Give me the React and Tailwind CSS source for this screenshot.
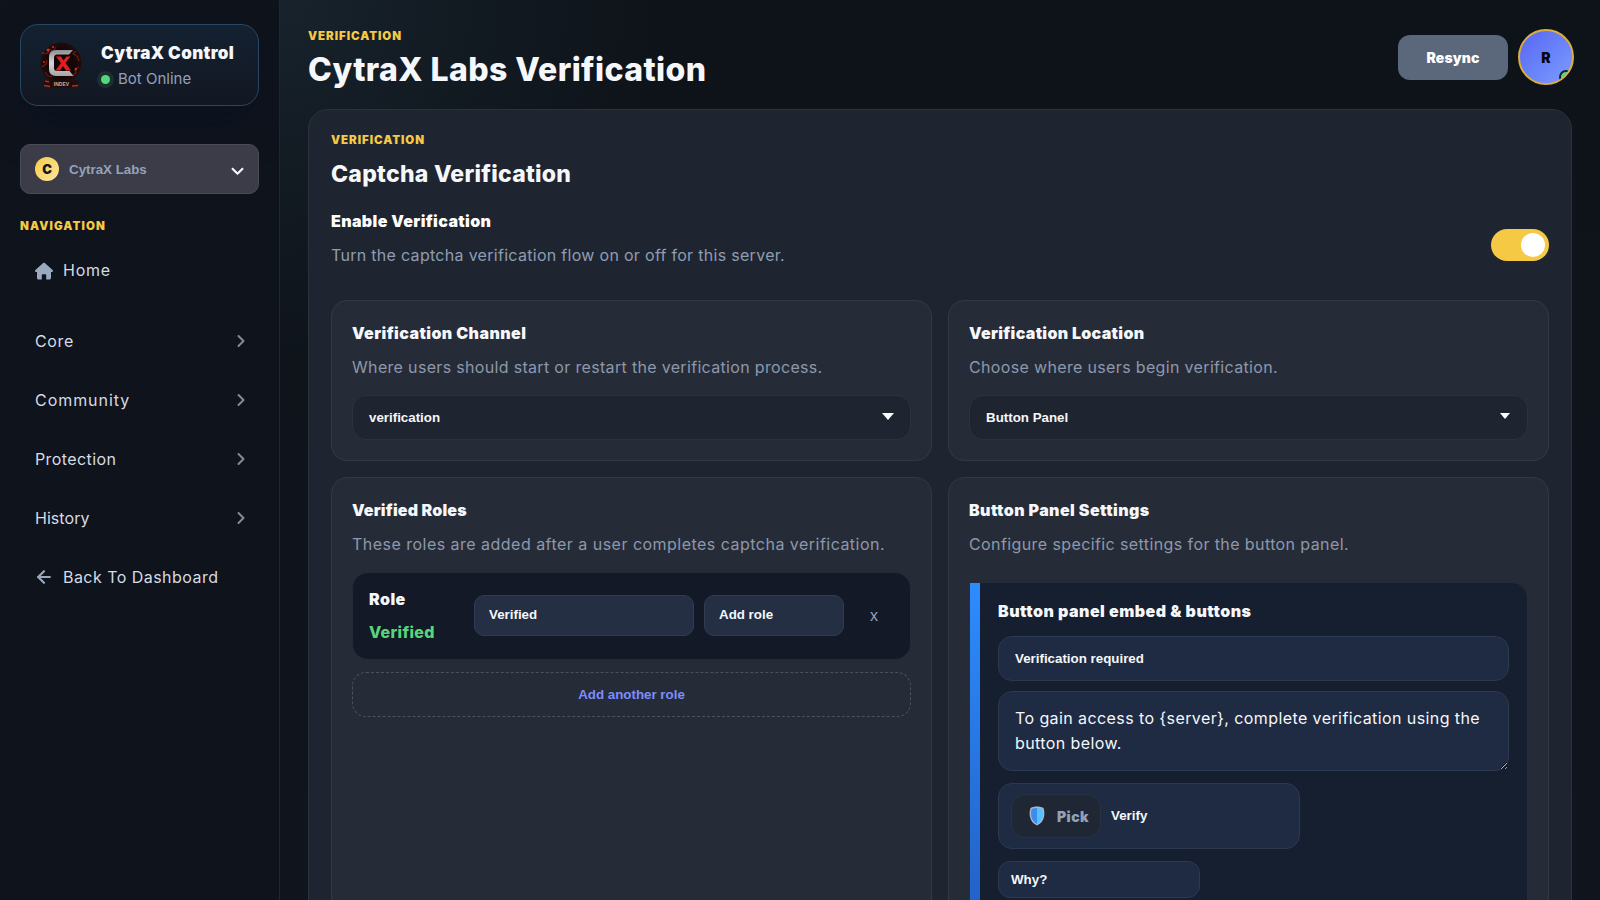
import React, { useState } from "react";
import { FaChevronDown } from "react-icons/fa6";
import { FiArrowLeft, FiChevronRight } from "react-icons/fi";

const navItems = [
  { label: "Core", track: "tracking-[0.65px]" },
  { label: "Community", track: "tracking-[0.95px]" },
  { label: "Protection", track: "tracking-[0.4px]" },
  { label: "History", track: "tracking-[0.05px]" },
];

const Logo = () => (
  <svg width="42" height="46" viewBox="0 0 42 46">
    <defs>
      <radialGradient id="orb">
        <stop offset="0" stopColor="#0d0506" />
        <stop offset="0.7" stopColor="#150708" />
        <stop offset="1" stopColor="#220c0c" />
      </radialGradient>
      <linearGradient id="steel" x1="0" y1="0" x2="0" y2="1">
        <stop offset="0" stopColor="#8f8f93" />
        <stop offset="0.5" stopColor="#d6d6da" />
        <stop offset="1" stopColor="#a5a5a9" />
      </linearGradient>
    </defs>
    <circle cx="21" cy="21" r="20.5" fill="url(#orb)" />
    <g fill="none" stroke="#6e1a12" strokeWidth="1.2" strokeLinejoin="round">
      <path d="M4 12l4-1 1-4 4 2 3-4M2 25l4-3 1-4M36 9l-3 3 4 2 2 5M39 25l-4 2 1 4-4 3M5 30l3 4 4 1" />
    </g>
    <g fill="#c9341f">
      <circle cx="8" cy="8" r="1.5" />
      <circle cx="13" cy="5" r="1.1" />
      <circle cx="36" cy="27" r="1.2" />
      <circle cx="4" cy="20" r="0.9" />
      <circle cx="3" cy="11" r="0.8" />
    </g>
    <path
      d="M33 8H16q-7 0-7 7v12q0 7 7 7h17.500l-4-5H17q-3 0-3-3V16q0-3.500 3-3.500h12z"
      fill="url(#steel)"
    />
    <path
      d="M16 14.500h5l2.500 4 3-4h4l-5 6.500 5.500 7.500h-5l-3-4.500-3 4.500h-4.500l5.500-7.500z"
      fill="#e01f1c"
    />
    <path d="M4 38q17 3 34 0l1 6q-17 3-36 0z" fill="#240a09" />
    <path
      d="M4 43.500l6 1M32 44l6-.5M5 39l4 1"
      stroke="#b5301a"
      strokeWidth="1.500"
    />
    <text
      x="21.500"
      y="43.500"
      textAnchor="middle"
      fontFamily="Liberation Sans"
      fontWeight="700"
      fontSize="5"
      fill="#b9b4b4"
    >
      INDEV
    </text>
  </svg>
);

const Caret = ({ wide }) => (
  <svg
    width={wide ? 12 : 10}
    height={wide ? 7 : 6}
    viewBox="0 0 12 7"
    className={wide ? "-mt-0.5 mr-2.5" : "-mt-[3px] mr-[11px]"}
  >
    <path d="M0 0h12L6 7z" fill="#fff" />
  </svg>
);

const Shield = () => (
  <svg width="16" height="20" viewBox="0 0 16 20">
    <path
      d="M8 .5C10.500 .5 12.500 1 14.500 2 15.500 5 15.600 8 15 11c-.8 4-3.500 7-7 8.500C4.500 18 1.800 15 1 11 .4 8 .5 5 1.500 2 3.500 1 5.500.5 8 .5z"
      fill="#a9b8cf"
    />
    <path d="M8 2C6 2 4.200 2.300 2.600 3 1.900 5.500 1.900 8 2.300 10.500 3 14 5 16.500 8 18z" fill="#3a8cee" />
    <path d="M8 2c2 0 3.800.3 5.400 1 .7 2.500.7 5 .3 7.500C13 14 11 16.500 8 18z" fill="#55c2fc" />
  </svg>
);

const CardHead = ({ title, titleTrack, desc, descTrack }) => (
  <>
    <h3
      className={`text-base leading-[26px] font-black whitespace-nowrap text-[#f5f7fb] ${titleTrack}`}
    >
      {title}
    </h3>
    <p
      className={`mt-2 text-base leading-[26px] whitespace-nowrap text-[#8d98ad] ${descTrack}`}
    >
      {desc}
    </p>
  </>
);

const Card = ({ children }) => (
  <div className="rounded-2xl border border-[#323945] bg-[#262c37] px-5 pt-[19px] pb-5">
    {children}
  </div>
);

const SelectBox = ({ value, wide }) => (
  <div className="mt-[15px] flex h-[45px] items-center justify-between rounded-[14px] border border-[#2b323d] bg-[#1f2530] pl-4 pr-1.5 font-['Liberation_Sans',sans-serif] text-[13.33px] font-bold text-[#f5f7fb]">
    <span>{value}</span>
    <Caret wide={wide} />
  </div>
);

const Sidebar = () => (
  <aside className="flex h-full w-[280px] shrink-0 flex-col border-r border-[#20262f] bg-[#0f131b] px-5 pt-6">
    <div className="flex h-[82px] items-center rounded-[18px] border border-[#274763] bg-linear-to-b from-[#142131] to-[#121722] pl-[19px] shadow-[0_18px_44px_rgba(6,18,42,0.45)]">
      <Logo />
      <div className="ml-[19px]">
        <p className="pt-px text-[17px] leading-6 font-black tracking-[0.35px] whitespace-nowrap text-[#f5f7fb]">
          CytraX Control
        </p>
        <div className="mt-[3px] flex items-center gap-[7px]">
          <span className="-ml-1 flex size-[17px] items-center justify-center rounded-full bg-[#1a3030]">
            <span className="size-[9px] rounded-full bg-[#57d57c]" />
          </span>
          <span className="-ml-[3px] text-[15px] leading-[22px] text-[#94a0b8]">
            Bot Online
          </span>
        </div>
      </div>
    </div>

    <button className="mt-[38px] flex h-[50px] shrink-0 items-center rounded-[10px] border border-[#4a4b57] bg-[#3b3c48] px-3.5 font-['Liberation_Sans',sans-serif] text-[13.33px] font-bold text-[#94a3b8]">
      <span className="flex size-6 items-center justify-center rounded-full bg-linear-to-br from-[#f6c945] to-[#ffe799] pt-0.5 font-[Inter] text-[13px] font-black text-[#11151d]">
        C
      </span>
      <span className="mt-0.5 ml-2.5">CytraX Labs</span>
      <FaChevronDown
        className="mt-[3px] ml-auto size-[13px] text-white"
        stroke="currentColor"
        strokeWidth={24}
      />
    </button>

    <p className="mt-[23px] text-[11.5px] leading-[18px] font-black tracking-[1.12px] text-[#f6c945]">
      NAVIGATION
    </p>

    <nav className="text-base text-[#d6dbe6]">
      <div className="mt-2.5 flex h-[50px] items-center pl-3.5">
        <svg width="20" height="18" viewBox="0 0 20 18" className="mt-px">
          <path
            d="M10 .8c.4 0 .8.1 1.100.4l7.500 6.800c.9.800.4 2-.7 2H17v6c0 .9-.6 1.500-1.500 1.500H12.200v-4.200c0-.6-.4-1-1-1H8.800c-.6 0-1 .4-1 1v4.200H4.500C3.600 17.500 3 16.900 3 16v-6H2.100c-1.100 0-1.600-1.200-.7-2l7.500-6.800C9.200.9 9.600.8 10 .8z"
            fill="#9aa8c0"
          />
        </svg>
        <span className="ml-[9px] tracking-[0.79px]">Home</span>
      </div>
      <div className="mt-4">
        {navItems.map((item) => (
          <div
            key={item.label}
            className="flex h-[59px] items-center justify-between pl-[15px]"
          >
            <span className={item.track}>{item.label}</span>
            <FiChevronRight className="mr-2 size-5 text-[#858b99]" strokeWidth={2.4} />
          </div>
        ))}
        <div className="flex h-[59px] items-center pl-3.5">
          <FiArrowLeft className="size-5 text-[#9aa8c0]" strokeWidth={2.6} />
          <span className="ml-[9px] tracking-[0.46px]">Back To Dashboard</span>
        </div>
      </div>
    </nav>
  </aside>
);

const Toggle = ({ on, onClick }) => (
  <button
    onClick={onClick}
    className={`flex h-8 w-[58px] items-center rounded-full px-1 ${
      on ? "justify-end bg-[#f6c945]" : "justify-start bg-[#3b4250]"
    }`}
  >
    <span className="size-6 rounded-full bg-white" />
  </button>
);

const VerifiedRoles = () => (
  <Card>
    <CardHead
      title="Verified Roles"
      titleTrack="tracking-[0.18px]"
      desc="These roles are added after a user completes captcha verification."
      descTrack="tracking-[0.477px]"
    />
    <div className="mt-[15px] flex h-[88px] items-center gap-2.5 rounded-2xl border border-[#242a36] bg-[#131926] px-4 pb-px">
      <div className="w-[95px] text-base leading-[26px]">
        <p className="font-black tracking-[0.45px] text-[#f5f7fb]">Role</p>
        <p className="mt-[7px] font-extrabold tracking-[0.3px] text-[#57d57c]">
          Verified
        </p>
      </div>
      <div className="flex h-[41px] w-[220px] items-center rounded-[10px] border border-[#303c50] bg-[#242f43] px-3.5 pb-px font-['Liberation_Sans',sans-serif] text-[13.33px] font-bold text-[#f5f7fb]">
        Verified
      </div>
      <div className="flex h-[41px] w-[140px] items-center rounded-[10px] border border-[#303c50] bg-[#242f43] px-3.5 pb-px font-['Liberation_Sans',sans-serif] text-[13.33px] font-bold text-[#f5f7fb]">
        Add role
      </div>
      <button className="w-10 text-center font-['Liberation_Sans',sans-serif] text-[16px] leading-5 text-[#94a0b8]">
        x
      </button>
    </div>
    <button className="mt-3 h-[45px] w-full rounded-[14px] border border-dashed border-[#4b515d] font-['Liberation_Sans',sans-serif] text-[13.33px] font-bold text-[#7c8cff]">
      Add another role
    </button>
  </Card>
);

const PanelSettings = () => (
  <Card>
    <CardHead
      title="Button Panel Settings"
      titleTrack="tracking-[0.43px]"
      desc="Configure specific settings for the button panel."
      descTrack="tracking-[0.4px]"
    />
    <div className="mt-[25px] flex h-[420px] overflow-hidden rounded-r-2xl border border-[#232d3b] bg-[#151f30]">
      <div className="w-2.5 shrink-0 bg-linear-to-b from-[#2d8cff] to-[#1f56b8]" />
      <div className="flex flex-1 flex-col items-start px-[18px] pt-[15px] text-[#f5f7fb]">
        <h4 className="text-base leading-[26px] font-black tracking-[0.49px] whitespace-nowrap">
          Button panel embed & buttons
        </h4>
        <div className="mt-3 flex h-[45px] w-full items-center rounded-[14px] border border-[#2d394c] bg-[#1f2b42] px-4 font-['Liberation_Sans',sans-serif] text-[13.33px] font-bold">
          Verification required
        </div>
        <textarea
          readOnly
          className="mt-2.5 h-20 w-full resize-y overflow-hidden rounded-[14px] border border-[#2d394c] bg-[#1f2b42] py-3.5 pr-2 pl-4 text-base leading-[25px] tracking-[0.41px] outline-none"
          value={
            "To gain access to {server}, complete verification using the\nbutton below."
          }
        />
        <div className="mt-3 flex h-[66px] w-[302px] items-center rounded-[14px] border border-[#2d394c] bg-[#1f2b42] pl-3">
          <div className="flex h-11 w-[90px] items-center rounded-[14px] border border-[#29323f] bg-[#1f2735] pl-[17px]">
            <Shield />
            <span className="ml-3 pt-px text-sm font-black tracking-[0.4px] text-[#94a0b8]">
              Pick
            </span>
          </div>
          <span className="ml-2.5 font-['Liberation_Sans',sans-serif] text-[13.33px] font-bold">
            Verify
          </span>
        </div>
        <div className="mt-3 flex h-[37px] w-[202px] items-center rounded-xl border border-[#2d394c] bg-[#1f2b42] px-3 font-['Liberation_Sans',sans-serif] text-[13.33px] font-bold">
          Why?
        </div>
      </div>
    </div>
  </Card>
);

const App = () => {
  const [enabled, setEnabled] = useState(true);

  return (
    <div className="flex h-[900px] w-[1600px] overflow-hidden bg-[#0f131a] font-[Inter,sans-serif]">
      <Sidebar />
      <main className="flex-1 overflow-hidden bg-[radial-gradient(ellipse_640px_620px_at_0px_0px,rgba(31,48,60,0.55)_0%,rgba(24,36,46,0.4)_30%,transparent_60%),linear-gradient(180deg,#0e1319_0%,#10141d_100%)] pr-7 pl-7">
        <header className="-mr-0.5 flex h-[109px] justify-between">
          <div className="pt-[27px]">
            <p className="text-[11.5px] leading-[18px] font-black tracking-[0.95px] text-[#f6c945]">
              VERIFICATION
            </p>
            <h1 className="mt-[3px] text-[32px] leading-[44px] font-extrabold tracking-[0.4px] whitespace-nowrap text-[#f5f7fb]">
              CytraX Labs Verification
            </h1>
          </div>
          <div className="mt-[29px] flex h-14 items-center gap-2.5">
            <button className="h-[45px] w-[110px] rounded-xl bg-[#5b677a] pt-0.5 text-sm font-black tracking-[0.1px] text-white">
              Resync
            </button>
            <div className="relative flex size-14 items-center justify-center overflow-hidden rounded-full border-2 border-[#dcae3c] bg-linear-to-br from-[#5865f2] to-[#7c9cff] text-sm font-black text-[#05070c]">
              <span className="mt-0.5">R</span>
              <span className="absolute -right-px -bottom-px size-3.5 rounded-full border-2 border-[#16202b] bg-[#57d57c]" />
            </div>
          </div>
        </header>

        <section className="h-[1000px] rounded-[20px] border border-[#2c323d] bg-[#1f2530] px-[22px] pt-[21px]">
          <p className="text-[11.5px] leading-[18px] font-black tracking-[0.95px] text-[#f6c945]">
            VERIFICATION
          </p>
          <h2 className="mt-[7px] text-[23px] leading-9 font-extrabold tracking-[0.27px] text-[#f5f7fb]">
            Captcha Verification
          </h2>
          <div className="mt-4 flex items-center justify-between">
            <div>
              <p className="text-base leading-[26px] font-black tracking-[0.37px] text-white">
                Enable Verification
              </p>
              <p className="mt-2 text-base leading-[26px] tracking-[0.296px] text-[#8e9db2]">
                Turn the captcha verification flow on or off for this server.
              </p>
            </div>
            <div className="mt-[13px]">
              <Toggle on={enabled} onClick={() => setEnabled(!enabled)} />
            </div>
          </div>

          <div className="mt-8 grid grid-cols-2 gap-4">
            <Card>
              <CardHead
                title="Verification Channel"
                titleTrack="tracking-[0.42px]"
                desc="Where users should start or restart the verification process."
                descTrack="tracking-[0.325px]"
              />
              <SelectBox value="verification" wide />
            </Card>
            <Card>
              <CardHead
                title="Verification Location"
                titleTrack="tracking-[0.32px]"
                desc="Choose where users begin verification."
                descTrack="tracking-[0.341px]"
              />
              <SelectBox value="Button Panel" />
            </Card>
            <VerifiedRoles />
            <PanelSettings />
          </div>
        </section>
      </main>
    </div>
  );
};

export default App;
